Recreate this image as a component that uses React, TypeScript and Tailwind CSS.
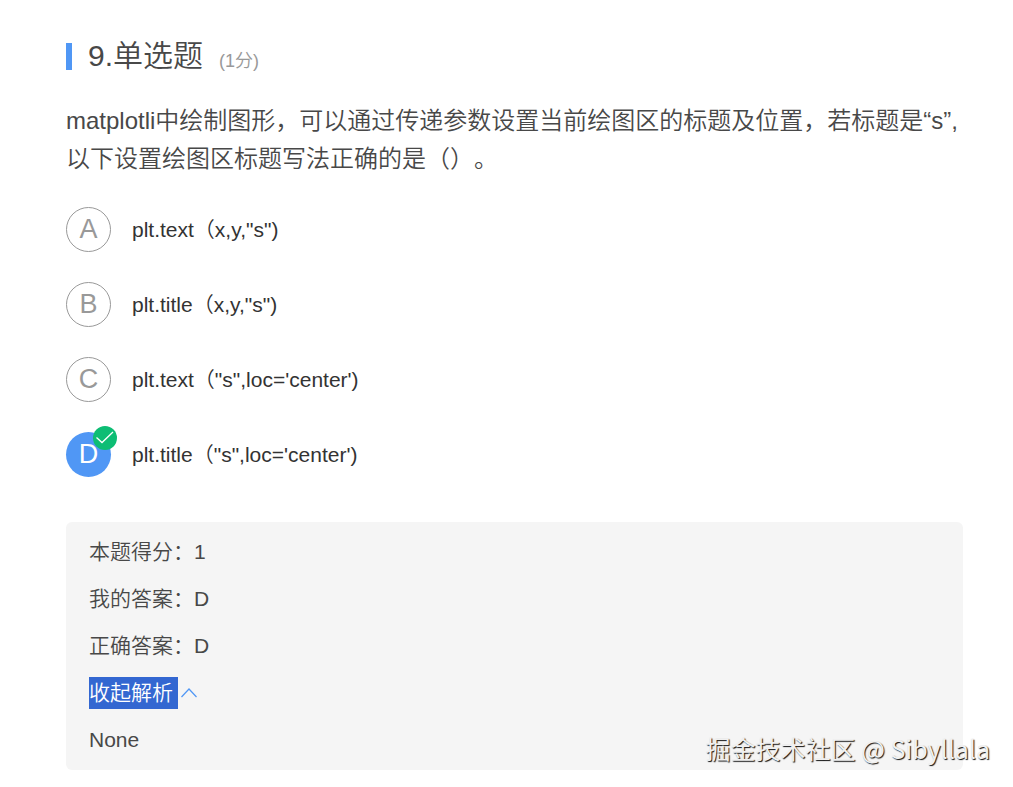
import { useState } from 'react'

const options = [
  { key: 'A', text: 'plt.text（x,y,"s")' },
  { key: 'B', text: 'plt.title（x,y,"s")' },
  { key: 'C', text: "plt.text（\"s\",loc='center')" },
  { key: 'D', text: "plt.title（\"s\",loc='center')" },
]

const correct = 'D'

function CheckBadge() {
  return (
    <svg className="absolute -top-1.5 -right-1.5 size-6" viewBox="0 0 24 24" fill="none">
      <circle cx="12" cy="12" r="12" fill="#0dbd74" />
      <path d="M3.5 11.5 9 16.5 20 6" stroke="white" strokeWidth="1.3" />
    </svg>
  )
}

export default function App() {
  const [answer, setAnswer] = useState('D')
  const [open, setOpen] = useState(true)

  return (
    <main className="relative bg-white pt-9 pr-[50px] pb-[17px] pl-[66px] font-['Liberation_Sans','Noto_Sans_CJK_SC',sans-serif] font-[350] text-[#484848] [text-spacing-trim:space-all]">
      <header className="flex items-center">
        <span className="h-[27px] w-1.5 bg-[#5097f5]" />
        <h1 className="ml-4 text-[30px] leading-10 font-[350]">9.单选题</h1>
        <span className="mt-2.5 ml-4 text-lg leading-7 text-[#999]">(1分)</span>
      </header>

      <p className="mt-[26px] text-2xl leading-[38px]">
        matplotli中绘制图形，可以通过传递参数设置当前绘图区的标题及位置，若标题是“s”,
        <br />
        以下设置绘图区标题写法正确的是（）。
      </p>

      <div role="radiogroup" className="mt-[29px] flex flex-col gap-[30px]">
        {options.map((option) => {
          const selected = option.key === answer
          return (
            <label key={option.key} className="flex h-[45px] cursor-pointer items-center gap-[21px]">
              <input
                type="radio"
                name="answer"
                value={option.key}
                checked={selected}
                onChange={() => setAnswer(option.key)}
                className="sr-only"
              />
              <span
                className={
                  selected
                    ? 'relative flex size-[45px] items-center justify-center rounded-full bg-[#5097f5] text-[27px] text-white'
                    : 'relative flex size-[45px] items-center justify-center rounded-full border border-[#999] text-[27px] text-[#999]'
                }
              >
                {option.key}
                {selected && option.key === correct && <CheckBadge />}
              </span>
              <span className="text-[21px] leading-8 text-[#333]">{option.text}</span>
            </label>
          )
        })}
      </div>

      <section className="mt-[45px] flex flex-col items-start gap-[15px] rounded-md bg-[#f5f5f5] px-[23px] py-3.5 text-[21px] leading-8">
        <p>本题得分：1</p>
        <p>我的答案：{answer}</p>
        <p>正确答案：{correct}</p>
        <button type="button" onClick={() => setOpen(!open)} className="flex items-center gap-[3px]">
          <span className="bg-[#3367d1] pr-[5px] text-white">收起解析</span>
          <svg className="size-4" viewBox="0 0 16 16" fill="none">
            <path d="M.5 12 8 4 15.5 12" stroke="#5097f5" strokeWidth="1.2" />
          </svg>
        </button>
        {open && <p>None</p>}
      </section>

      <span className="absolute right-[23px] bottom-[21px] font-['Noto_Sans_CJK_SC',sans-serif] text-[25px] leading-9 font-normal text-[#f0f0f0] [text-shadow:1px_1px_1px_#111]">
        掘金技术社区 @ Sibyllala
      </span>
    </main>
  )
}
